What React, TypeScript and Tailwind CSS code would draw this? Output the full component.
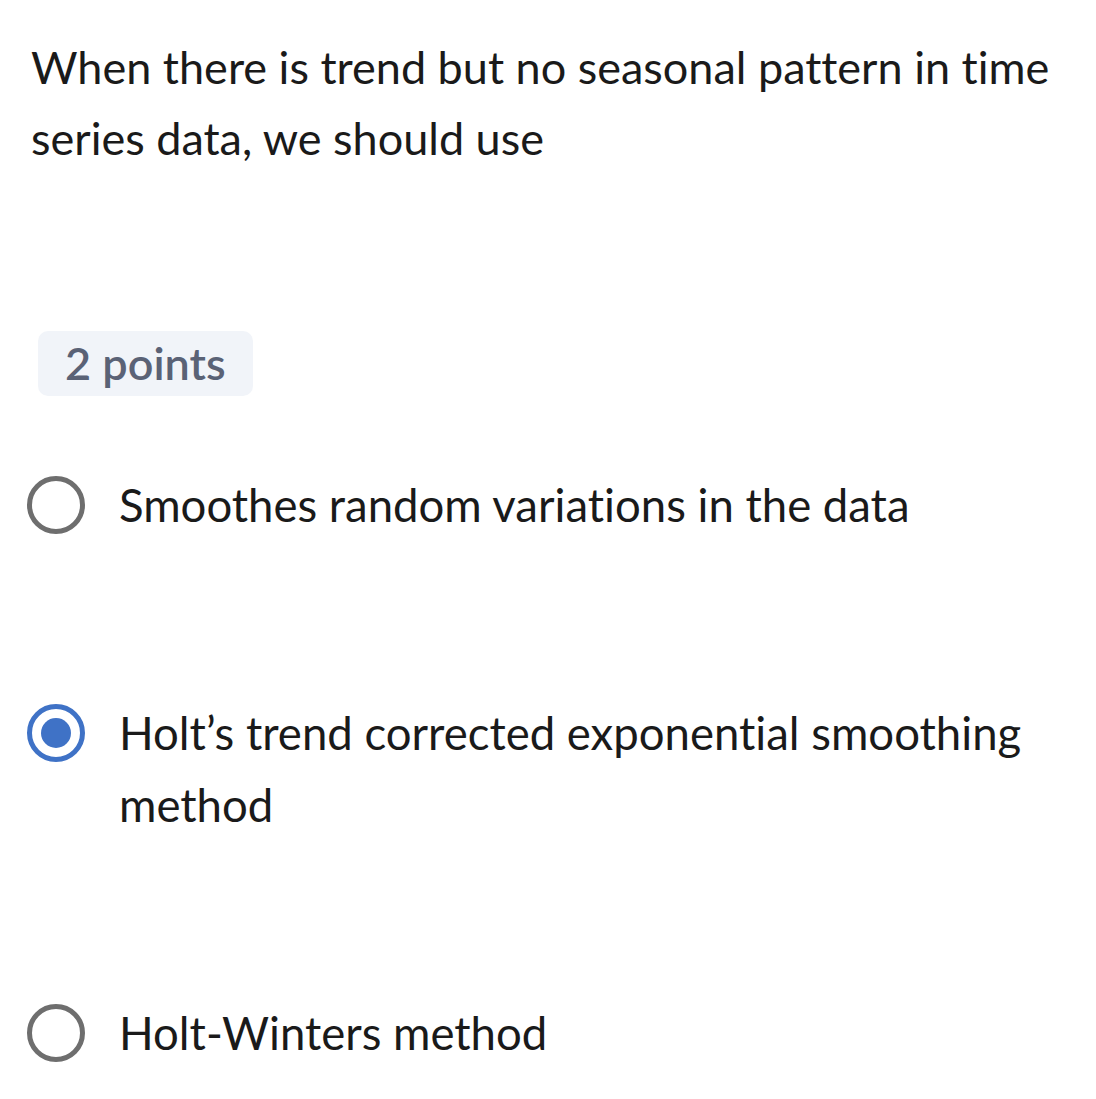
import React from "react";

const font = { fontFamily: "Lato, 'Open Sans', sans-serif" };

function Radio({ checked }: { checked?: boolean }) {
    return checked ? (
        <span className="flex size-[58px] shrink-0 items-center justify-center rounded-full border-[5px] border-[#3f72c6]">
            <span className="size-[30px] rounded-full bg-[#3f72c6]" />
        </span>
    ) : (
        <span className="size-[58px] shrink-0 rounded-full border-[5px] border-[#6e6e6e]" />
    );
}

const options = [
    { label: "Smoothes random variations in the data", checked: false },
    { label: "Holt’s trend corrected exponential smoothing method", checked: true },
    { label: "Holt-Winters method", checked: false },
];

export default function App() {
    return (
        <div className="min-h-[1099px] w-[1096px] bg-white text-[#1a1a1a] [font-variant-ligatures:none]" style={font}>
            <p className="px-[31px] pt-[32px] text-[45px] leading-[71px]">
                When there is trend but no seasonal pattern in time series data, we should use
            </p>

            <div className="mt-[157px] pl-[38px]">
                <span className="inline-block rounded-[10px] bg-[#f1f4f9] px-[27px] text-[45px] leading-[65px] font-semibold text-[#5a6276]">
                    2 points
                </span>
            </div>

            <div className="mt-[73px] flex flex-col">
                <div className="flex h-[72px] items-center gap-[34px] pl-[27px]">
                    <Radio />
                    <span className="text-[45.5px] leading-[72px]">{options[0].label}</span>
                </div>
                <div className="mt-[156px] flex items-start gap-[34px] pl-[27px]">
                    <div className="flex h-[72px] items-center">
                        <Radio checked />
                    </div>
                    <span className="w-[950px] text-[45.5px] leading-[72px]">{options[1].label}</span>
                </div>
                <div className="mt-[156px] flex h-[72px] items-center gap-[34px] pl-[27px]">
                    <Radio />
                    <span className="text-[45.5px] leading-[72px]">{options[2].label}</span>
                </div>
            </div>
        </div>
    );
}
